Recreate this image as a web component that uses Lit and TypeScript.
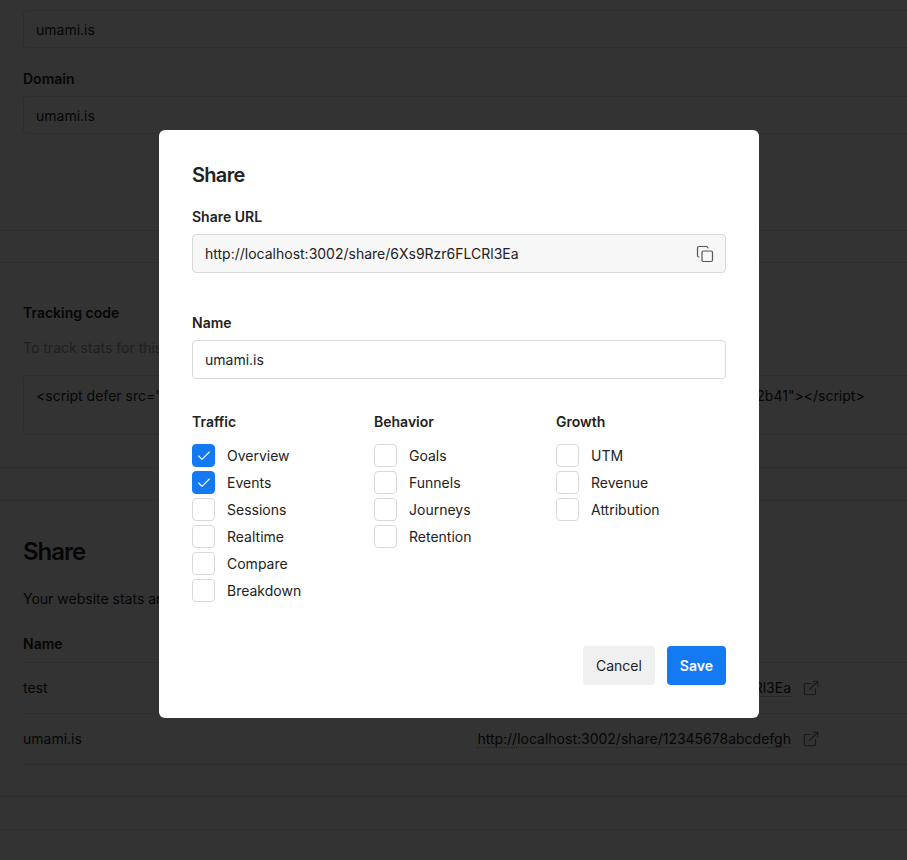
import { LitElement, html, css, svg } from 'lit';
import { customElement } from 'lit/decorators.js';

const copyIcon = svg`<rect x="8" y="8" width="14" height="14" rx="2"></rect><path d="M4 16c-1.1 0-2-.9-2-2V4c0-1.1.9-2 2-2h10c1.1 0 2 .9 2 2"></path>`;
const linkIcon = svg`<path d="M18 13v6a2 2 0 0 1-2 2H5a2 2 0 0 1-2-2V8a2 2 0 0 1 2-2h6"></path><path d="M15 3h6v6"></path><path d="M10 14 21 3"></path>`;

const groups = [
  { title: 'Traffic', items: ['Overview', 'Events', 'Sessions', 'Realtime', 'Compare', 'Breakdown'] },
  { title: 'Behavior', items: ['Goals', 'Funnels', 'Journeys', 'Retention'] },
  { title: 'Growth', items: ['UTM', 'Revenue', 'Attribution'] },
];
const checked = ['Overview', 'Events'];

const shares = [
  { name: 'test', url: 'http://localhost:3002/share/6Xs9Rzr6FLCRl3Ea' },
  { name: 'umami.is', url: 'http://localhost:3002/share/12345678abcdefgh' },
];

@customElement('share-dialog')
export class ShareDialog extends LitElement {
  static styles = css`
    :host {
      display: block;
      width: 600px;
      box-sizing: border-box;
      padding: 33px;
      background: #fff;
      border-radius: 6px;
      color: #222;
      font-size: 14px;
    }

    h2 {
      margin: 0;
      font-size: 20px;
      line-height: 24px;
      font-weight: 600;
      letter-spacing: -0.7px;
    }

    label, h3 {
      display: block;
      margin: 0;
      font-size: 14px;
      line-height: 20px;
      font-weight: 600;
    }

    .share-label {
      margin-top: 20px;
    }

    .field {
      display: flex;
      align-items: center;
      justify-content: space-between;
      box-sizing: border-box;
      height: 39px;
      margin-top: 7px;
      padding: 0 12px;
      border: 1px solid #d9d9d9;
      border-radius: 4px;
      line-height: 20px;
    }

    .readonly {
      background: #f7f7f7;
    }

    .field svg {
      width: 18px;
      height: 18px;
      margin-right: -1px;
      fill: none;
      stroke: #555;
      stroke-width: 1.6;
      stroke-linecap: round;
      stroke-linejoin: round;
    }

    .name-label {
      margin-top: 40px;
    }

    .groups {
      display: grid;
      grid-template-columns: repeat(3, 182px);
      margin-top: 33px;
    }

    .items {
      display: flex;
      flex-direction: column;
      gap: 4px;
      margin-top: 12px;
    }

    .item {
      display: flex;
      align-items: center;
      gap: 12px;
      height: 23px;
    }

    .box {
      display: flex;
      align-items: center;
      justify-content: center;
      box-sizing: border-box;
      width: 23px;
      height: 23px;
      border: 1px solid #d9d9d9;
      border-radius: 4px;
      background: #fff;
    }

    .box.on {
      border-color: #147af3;
      background: #147af3;
    }

    .box svg {
      width: 16px;
      height: 16px;
      fill: none;
      stroke: #fff;
      stroke-width: 1.6;
      stroke-linecap: round;
      stroke-linejoin: round;
    }

    .actions {
      display: flex;
      justify-content: flex-end;
      gap: 12px;
      margin-top: 44px;
    }

    button {
      height: 39px;
      padding: 0 13px;
      border: 0;
      border-radius: 4px;
      font: inherit;
      background: #f0f0f0;
      color: #222;
    }

    button.primary {
      background: #147af3;
      color: #fff;
      font-weight: 600;
    }
  `;

  render() {
    return html`
      <h2>Share</h2>
      <label class="share-label">Share URL</label>
      <div class="field readonly">
        <span>http://localhost:3002/share/6Xs9Rzr6FLCRl3Ea</span>
        <svg viewBox="0 0 24 24">${copyIcon}</svg>
      </div>
      <label class="name-label">Name</label>
      <div class="field">umami.is</div>
      <div class="groups">
        ${groups.map(
          (group) => html`
            <div>
              <h3>${group.title}</h3>
              <div class="items">
                ${group.items.map((item) => {
                  const on = checked.includes(item);
                  return html`
                    <div class="item">
                      <span class="box ${on ? 'on' : ''}">
                        ${on ? html`<svg viewBox="0 0 24 24"><path d="M20 6 9 17l-5-5"></path></svg>` : ''}
                      </span>
                      <span>${item}</span>
                    </div>
                  `;
                })}
              </div>
            </div>
          `
        )}
      </div>
      <div class="actions">
        <button>Cancel</button>
        <button class="primary">Save</button>
      </div>
    `;
  }
}

@customElement('app-root')
export class AppRoot extends LitElement {
  static styles = css`
    :host {
      display: block;
      position: relative;
      height: 860px;
      overflow: hidden;
      background: #fff;
      color: #222;
      font-family: Inter, "Noto Sans", sans-serif;
      font-size: 14px;
      line-height: 20px;
    }

    .page {
      padding-top: 10px;
    }

    .section {
      padding: 0 0 0 23px;
    }

    .input {
      box-sizing: border-box;
      width: 1100px;
      height: 38px;
      padding: 0 12px;
      border: 1px solid #e0e0e0;
      border-radius: 4px;
      line-height: 38px;
    }

    .label {
      font-weight: 600;
    }

    .domain {
      margin-top: 21px;
      margin-bottom: 7px;
    }

    .rule {
      height: 1px;
      background: #e6e6e6;
    }

    .code {
      box-sizing: border-box;
      width: 1100px;
      height: 60px;
      margin-top: 17px;
      padding: 10px 12px;
      border: 1px solid #e0e0e0;
      border-radius: 4px;
      line-height: 20px;
      white-space: nowrap;
      overflow: hidden;
    }

    .muted {
      margin-top: 15px;
      color: #999;
    }

    h1 {
      margin: 0;
      font-size: 24px;
      line-height: 32px;
      font-weight: 600;
      letter-spacing: -1px;
    }

    .row {
      display: grid;
      grid-template-columns: 449px 1fr;
      align-items: center;
      height: 50px;
      border-bottom: 1px solid #e6e6e6;
    }

    .row.head {
      height: 28px;
      margin-top: 25px;
      align-items: start;
      font-weight: 600;
    }

    .url {
      display: flex;
      align-items: center;
      gap: 11px;
    }

    .url span {
      width: 319px;
      text-align: right;
      line-height: 18px;
    }

    .url u {
      text-decoration: none;
      border-bottom: 1px dotted #999;
    }

    .url svg {
      width: 18px;
      height: 18px;
      fill: none;
      stroke: #777;
      stroke-width: 1.5;
      stroke-linecap: round;
      stroke-linejoin: round;
    }

    .overlay {
      position: absolute;
      inset: 0;
      display: flex;
      align-items: flex-start;
      justify-content: center;
      padding-top: 130px;
      padding-left: 11px;
      background: rgba(0, 0, 0, 0.8);
    }
  `;

  render() {
    return html`
      <div class="page">
        <div class="section">
          <div class="input">umami.is</div>
          <div class="label domain">Domain</div>
          <div class="input">umami.is</div>
        </div>
        <div class="rule" style="margin-top:96px"></div>
        <div class="rule" style="margin-top:31px"></div>
        <div class="section" style="padding-top:40px">
          <div class="label">Tracking code</div>
          <div class="muted">To track stats for this website, place the following code in the head section of your website.</div>
          <div class="code">&lt;script defer src="http://localhost:3000/script.js" data-website-id="02d89813-7a72-41e1-87f0-8d668e858e2b41"&gt;&lt;/script&gt;</div>
        </div>
        <div class="rule" style="margin-top:32px"></div>
        <div class="rule" style="margin-top:32px"></div>
        <div class="section" style="padding-top:35px">
          <h1>Share</h1>
          <div style="margin-top:21px">Your website stats are publicly available at the following URLs.</div>
          <div class="row head"><span>Name</span><span>Share URL</span></div>
          ${shares.map(
            (share) => html`
              <div class="row">
                <span>${share.name}</span>
                <div class="url">
                  <span><u>${share.url}</u></span>
                  <svg viewBox="0 0 24 24">${linkIcon}</svg>
                </div>
              </div>
            `
          )}
        </div>
        <div class="rule" style="margin-top:31px"></div>
        <div class="rule" style="margin-top:32px"></div>
      </div>
      <div class="overlay">
        <share-dialog></share-dialog>
      </div>
    `;
  }
}
